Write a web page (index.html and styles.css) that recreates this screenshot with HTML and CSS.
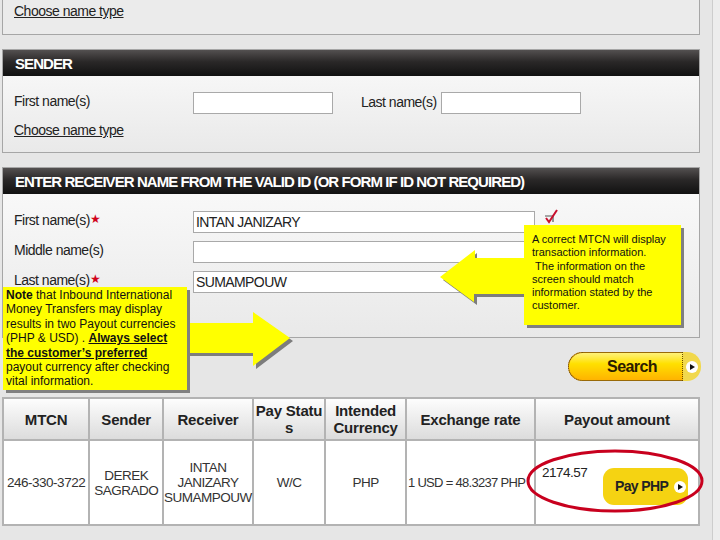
FILE: index.html
```html
<!DOCTYPE html>
<html lang="en">
<head>
	<meta charset="UTF-8">
	<title>Receive Money - Search</title>
	<link rel="stylesheet" href="styles.css">
</head>
<body>
	<div class="page">
		<!-- name type panel (cut at top) -->
		<div class="panel panel-top">
			<a class="link" href="#">Choose name type</a>
		</div>

		<!-- sender -->
		<div class="panel">
			<div class="panel-head">SENDER</div>
			<div class="panel-body sender-body">
				<div class="row">
					<span class="label">First name(s)</span>
					<input class="field short" type="text">
					<span class="label last">Last name(s)</span>
					<input class="field short" type="text">
				</div>
				<a class="link" href="#">Choose name type</a>
			</div>
		</div>

		<!-- receiver -->
		<div class="panel">
			<div class="panel-head">ENTER RECEIVER NAME FROM THE VALID ID (OR FORM IF ID NOT REQUIRED)</div>
			<div class="panel-body receiver-body">
				<div class="row">
					<span class="label">First name(s)<i class="req">★</i></span>
					<input class="field long" type="text" value="INTAN JANIZARY">
					<svg class="check" width="16" height="16" viewBox="0 0 16 16">
						<path d="M2 7 H10 V13" fill="none" stroke="#555" stroke-width="1.2"/>
						<path d="M3 9 L6 13 L14 1" fill="none" stroke="#c8102e" stroke-width="2"/>
					</svg>
				</div>
				<div class="row">
					<span class="label">Middle name(s)</span>
					<input class="field long" type="text">
				</div>
				<div class="row">
					<span class="label">Last name(s)<i class="req">★</i></span>
					<input class="field long" type="text" value="SUMAMPOUW">
				</div>
			</div>
		</div>

		<div class="search-row">
			<div class="search-btn">
				<span class="search-main">Search</span>
				<span class="search-end"><span class="go"></span></span>
			</div>
		</div>

		<table class="results">
			<tr>
				<th class="c1">MTCN</th>
				<th class="c2">Sender</th>
				<th class="c3">Receiver</th>
				<th class="c4">Pay Statu s</th>
				<th class="c5">Intended Currency</th>
				<th class="c6">Exchange rate</th>
				<th class="c7">Payout amount</th>
			</tr>
			<tr>
				<td>246-330-3722</td>
				<td>DEREK<br>SAGRADO</td>
				<td>INTAN<br>JANIZARY<br>SUMAMPOUW</td>
				<td>W/C</td>
				<td>PHP</td>
				<td class="rate">1 USD = 48.3237 PHP</td>
				<td class="payout">
					<div class="amount">2174.57</div>
					<div class="pay-btn">Pay PHP<span class="go"></span></div>
				</td>
			</tr>
		</table>

		<!-- callouts over the page -->
		<svg class="arrow" width="720" height="540" viewBox="0 0 720 540">
			<polygon points="190,326 256,326 256,315 293,341 256,369 256,356 190,356" fill="#7d7d7d"/>
			<polygon points="187,323 253,323 253,312 290,338 253,366 253,353 187,353" fill="#ffff00"/>
			<polygon points="526,261 477,261 477,253 443,280 477,305 477,297 526,297" fill="#7d7d7d"/>
			<polygon points="524,258 475,258 475,250 440,277 474,302 474,294 524,294" fill="#ffff00"/>
			<ellipse cx="615" cy="481" rx="87" ry="30" fill="none" stroke="#c8001e" stroke-width="3"/>
		</svg>

		<div class="note note-left">
			<b>Note</b> that Inbound International<br>
			Money Transfers may display<br>
			results in two Payout currencies<br>
			(PHP &amp; USD) . <b><u>Always select<br>
			the customer’s preferred</u></b><br>
			payout currency after checking<br>
			vital information.
		</div>

		<div class="note note-right">
			A correct MTCN will display<br>
			transaction information.<br>
			&nbsp;The information on the<br>
			screen should match<br>
			information stated by the<br>
			customer.
		</div>
	</div>
</body>
</html>
```

FILE: styles.css
```css
*{
	margin:0;
	padding:0;
	box-sizing: border-box;
}
html,body{ height: 100%; }
body{
	background: #ededed;
	font-family: "Liberation Sans", Arial, sans-serif;
	color: #222;
	overflow: hidden;
}
.page{
	position: relative;
	width: 713px;
	height: 540px;
	padding: 0 13px 0 2px;
	background: #e6e6e6;
	border-right: 1px solid #cdcdcd;
}
.panel{
	width: 698px;
	border: 1px solid #a6a6a6;
	margin-bottom: 14px;
	background: linear-gradient(#fbfbfb, #e9e9e9);
}
.panel-top{
	height: 35px;
	border-top: none;
	padding: 2px 11px 0;
	background: #ebebeb;
}
.link{
	font-size: 14px;
	line-height: 16px;
	letter-spacing: -0.5px;
	color: #222;
	text-decoration: underline;
}
.panel-head{
	height: 26px;
	line-height: 28px;
	padding-left: 12px;
	font-size: 15px;
	font-weight: bold;
	letter-spacing: -0.93px;
	color: #fff;
	background: linear-gradient(#535050, #2a2828 45%, #111);
}
.panel-body{
	padding: 0 11px;
}
.sender-body{
	height: 76px;
	padding-top: 16px;
}
.sender-body .row{
	margin-bottom: 7px;
}
.receiver-body{
	height: 143px;
	padding-top: 17px;
}
.receiver-body .row{
	margin-bottom: 8px;
}
.row{
	display: flex;
	align-items: center;
	height: 22px;
}
.label{
	width: 179px;
	font-size: 14px;
	letter-spacing: -0.5px;
	margin-top: -5px;
}
.label.last{
	width: auto;
	margin-left: 28px;
	margin-right: 4px;
	margin-top: -3px;
}
.req{
	font-style: normal;
	font-size: 12px;
	color: #d0021b;
	vertical-align: 2px;
}
.field{
	height: 22px;
	border: 1px solid #a9a9a9;
	background: #fff;
	padding: 0 2px;
	font-family: "Liberation Sans", Arial, sans-serif;
	font-size: 14px;
	letter-spacing: -0.6px;
	color: #222;
	outline: none;
}
.field.short{ width: 140px; }
.field.long{ width: 342px; }
.check{ margin-left: 8px; margin-top: -10px; }

.search-row{
	display: flex;
	justify-content: flex-end;
	width: 698px;
}
.search-btn{
	display: flex;
	height: 29px;
	margin-right: -1px;
}
.search-main{
	width: 115px;
	line-height: 27px;
	padding-left: 12px;
	text-align: center;
	font-size: 16px;
	font-weight: bold;
	letter-spacing: -0.6px;
	color: #2b1c00;
	background: linear-gradient(#fff27a, #ffe000 40%, #ffb300);
	border: 1px solid #c98a10;
	border-right: none;
	border-radius: 15px 0 0 15px;
	outline: 1px dotted #6b4a00;
	outline-offset: -1px;
}
.search-end{
	width: 18px;
	display: flex;
	align-items: center;
	justify-content: center;
	background: #f1d84c;
	border-radius: 0 14px 14px 0;
}
.go{
	display: inline-block;
	position: relative;
	flex: none;
	width: 12px;
	height: 12px;
	border-radius: 50%;
	background: #fff;
}
.go:after{
	content: '';
	position: absolute;
	left: 4px;
	top: 3px;
	border-left: 5px solid #111;
	border-top: 3px solid transparent;
	border-bottom: 3px solid transparent;
}

.results{
	margin-top: 16px;
	width: 698px;
	border-collapse: collapse;
	background: #fff;
	font-size: 13.5px;
	letter-spacing: -0.5px;
	color: #333;
}
.results th,.results td{
	border: 2px solid #b3b3b3;
	text-align: center;
}
.results th{
	height: 42px;
	font-size: 15px;
	line-height: 17px;
	letter-spacing: -0.2px;
	color: #222;
	background: linear-gradient(#fdfdfd, #dcdcdc);
}
.results td{
	height: 85px;
	line-height: 15px;
}
.c1{ width: 87px; }
.c2{ width: 74px; }
.c3{ width: 87px; }
.c4{ width: 73px; }
.c5{ width: 81px; }
.c6{ width: 130px; }
.c7{ width: 166px; }
.results td.rate{ text-align: left; padding-left: 1px; font-size: 13px; letter-spacing: -0.7px; }
.results td.payout{
	position: relative;
	text-align: left;
	vertical-align: top;
	padding: 24px 0 0 6px;
}
.amount{ color: #222; }
.pay-btn{
	position: absolute;
	left: 67px;
	top: 27px;
	width: 85px;
	height: 37px;
	display: flex;
	align-items: center;
	gap: 6px;
	padding-left: 12px;
	border-radius: 11px;
	background: #f5d312;
	font-size: 14px;
	font-weight: bold;
	letter-spacing: -0.6px;
	white-space: nowrap;
	color: #222;
}

.arrow{
	position: absolute;
	left: 0;
	top: 0;
	pointer-events: none;
}
.note{
	position: absolute;
	background: #ffff00;
	box-shadow: 3px 3px 0 #808080;
	color: #111;
}
.note-left{
	left: 3px;
	top: 287px;
	width: 184px;
	height: 103px;
	padding: 1px 0 0 3px;
	font-size: 12px;
	line-height: 14.4px;
}
.note-right{
	left: 524px;
	top: 225px;
	width: 157px;
	height: 100px;
	padding: 8px 0 0 8px;
	font-size: 11px;
	line-height: 13.3px;
}
```
